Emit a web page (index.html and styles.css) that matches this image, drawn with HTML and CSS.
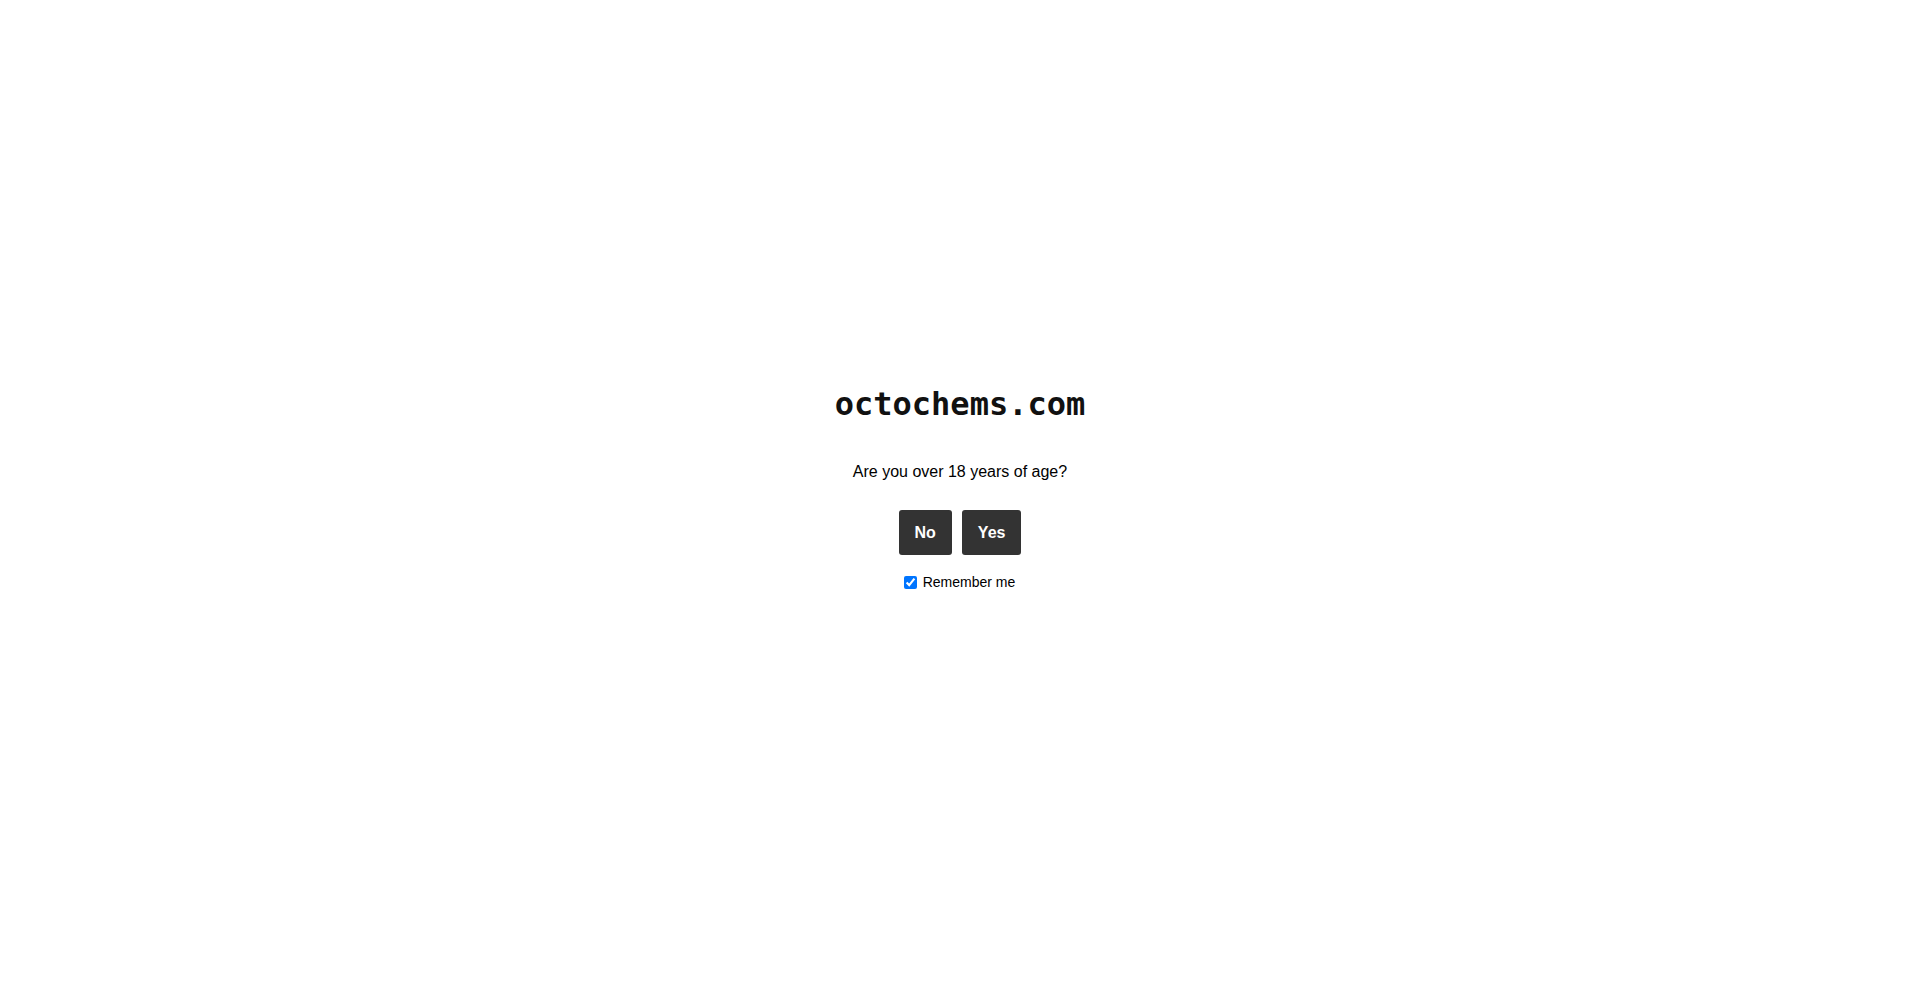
FILE: index.html
```html
<!DOCTYPE html>
<html lang="en">
<head>
<meta charset="utf-8">
<title>octochems.com</title>
<link rel="stylesheet" href="styles.css">
</head>
<body>
<div class="gate">
  <div class="box">
    <h1 class="title">octochems.com</h1>
    <p class="question">Are you over 18 years of age?</p>
    <div class="buttons">
      <button class="btn">No</button>
      <button class="btn">Yes</button>
    </div>
    <label class="remember"><input type="checkbox" checked> Remember me</label>
  </div>
</div>
</body>
</html>
```
FILE: styles.css
```css
html, body {
  margin: 0;
  padding: 0;
  background: #fff;
  color: #000;
  font-family: "Liberation Sans", Arial, sans-serif;
}
.gate {
  height: 993px;
  display: flex;
  flex-direction: column;
  align-items: center;
}
.box {
  margin-top: 384px;
  display: flex;
  flex-direction: column;
  align-items: center;
}
.title {
  margin: 0;
  font-family: "DejaVu Sans Mono", monospace;
  font-weight: bold;
  font-size: 32px;
  line-height: 40px;
  color: #111;
}
.question {
  margin: 39px 0 0;
  font-size: 16px;
  line-height: 18px;
}
.buttons {
  margin-top: 29px;
  display: flex;
  gap: 10px;
}
.btn {
  background: #333;
  color: #fff;
  border: none;
  border-radius: 3px;
  padding: 12px 16px;
  font-family: "Liberation Sans", Arial, sans-serif;
  font-weight: bold;
  font-size: 16px;
  line-height: 21px;
  cursor: pointer;
}
.remember {
  margin-top: 18px;
  display: flex;
  align-items: center;
  gap: 6px;
  font-size: 14px;
  line-height: 18px;
}
.remember input {
  margin: 0 0 0 -1px;
  width: 13px;
  height: 13px;
}
```
